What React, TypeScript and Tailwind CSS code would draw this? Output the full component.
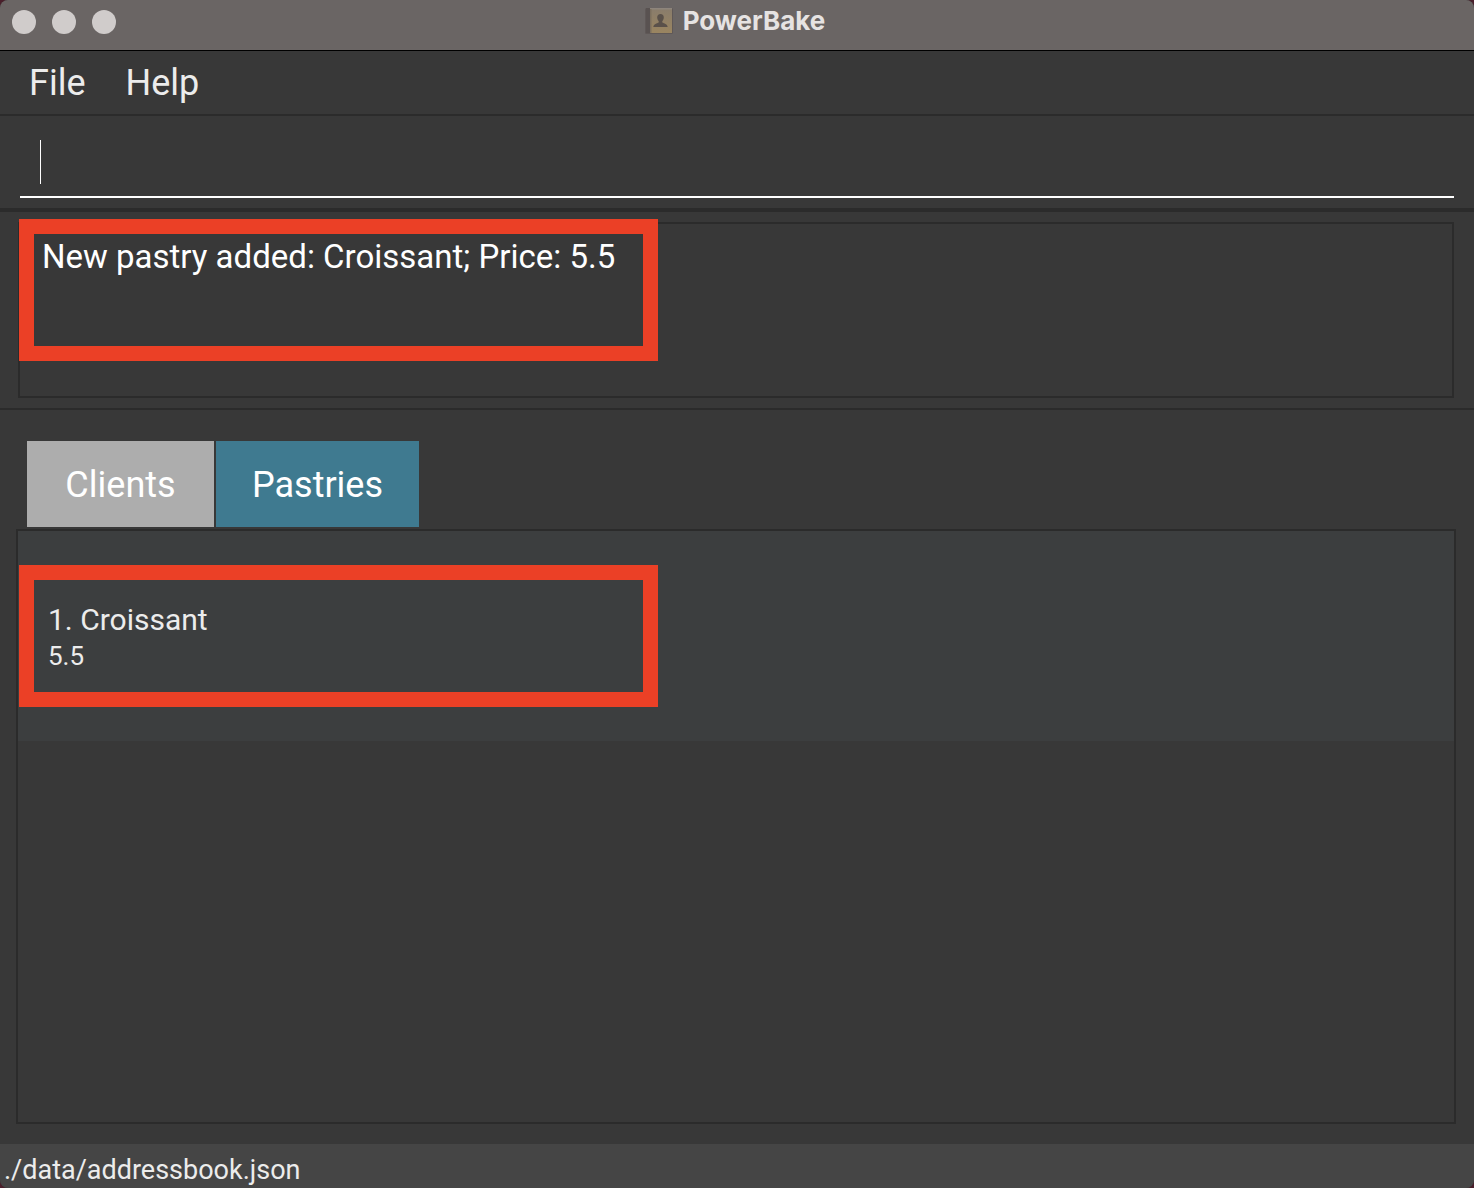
import React from "react";

function BookIcon() {
  return (
    <svg width="28" height="28" viewBox="0 0 28 28" aria-hidden="true">
      <defs>
        <linearGradient id="cover" x1="0" y1="0" x2="0" y2="1">
          <stop offset="0" stopColor="#897c6b" />
          <stop offset="1" stopColor="#9a8560" />
        </linearGradient>
      </defs>
      <rect x="0" y="1" width="28" height="26" rx="1.5" fill="#5f5857" />
      <rect x="1" y="1" width="4" height="25" fill="#595251" />
      <rect x="5" y="2" width="22" height="24" fill="url(#cover)" />
      <rect x="5" y="1" width="22" height="1.5" fill="#8e857c" />
      <rect x="5" y="2" width="1.5" height="24" fill="#7d705e" />
      <path
        d="M15.500 7c2.100 0 3.300 1.500 3.300 3.500 0 1.600-.7 2.800-1.500 3.600v1.400c1.800.9 5 1.300 5.400 4.500H8.300c.4-3.200 3.600-3.600 5.400-4.500v-1.400c-.8-.8-1.500-2-1.500-3.600 0-2 1.200-3.500 3.300-3.500z"
        fill="#5a514a"
      />
    </svg>
  );
}

function TitleBar() {
  return (
    <header className="relative flex h-[51px] shrink-0 items-start border-b border-black bg-[#6a6564]">
      <div className="absolute top-2.5 left-3 flex gap-4">
        <button aria-label="Close" className="size-6 rounded-full bg-[#d0cccb]" />
        <button aria-label="Minimize" className="size-6 rounded-full bg-[#d0cccb]" />
        <button aria-label="Zoom" className="size-6 rounded-full bg-[#d0cccb]" />
      </div>
      <div className="flex h-[42px] w-full items-center justify-center gap-2.5 pr-1">
        <BookIcon />
        <h1 className="font-['Inter',sans-serif] text-[26px] leading-8 font-bold text-[#e6e3e2]">PowerBake</h1>
      </div>
    </header>
  );
}

function Highlight({ className }: { className: string }) {
  return (
    <div
      className={`pointer-events-none absolute h-[142px] w-[639px] border-[15px] border-[#eb4026] ${className}`}
    />
  );
}

export default function App() {
  return (
    <div className="min-h-screen bg-[#4a1f2b] font-['Roboto',sans-serif]">
      <div className="flex min-h-screen flex-col overflow-hidden rounded-lg bg-[#383838]">
        <TitleBar />

        <nav className="flex h-[65px] shrink-0 items-center gap-10 border-b-2 border-[#2b2b2b] px-[29px] text-[36px] leading-[44px] text-[#ececec]">
          <button>File</button>
          <button>Help</button>
        </nav>

        <div className="shrink-0 border-b-4 border-[#2b2b2b] px-5 pt-3 pb-2.5">
          <div className="flex h-[70px] items-center border-b-2 border-white pl-5">
            <span className="h-11 w-px bg-white" />
            <input
              aria-label="Command"
              className="h-11 flex-1 bg-transparent text-[33px] text-white caret-transparent outline-none"
            />
          </div>
        </div>

        <section className="relative shrink-0 border-b-2 border-[#2b2b2b] py-2.5 pr-5 pl-[18px]">
          <textarea
            readOnly
            aria-label="Result"
            defaultValue="New pastry added: Croissant; Price: 5.5"
            className="block h-44 w-full resize-none border-2 border-[#2b2b2b] bg-transparent px-[22px] py-3 text-[33px] leading-[42px] text-white outline-none"
          />
          <Highlight className="top-[7px] left-[19px]" />
        </section>

        <main className="flex flex-1 flex-col px-4 pt-[31px] pb-5">
          <div role="tablist" className="flex gap-0.5 pb-0.5 pl-[11px] text-[36px] leading-[44px] text-white">
            <button role="tab" aria-selected="false" className="h-[86px] w-[187px] bg-[#adadad] pt-0.5">
              Clients
            </button>
            <button role="tab" aria-selected="true" className="h-[86px] w-[203px] bg-[#3f7a90] pt-0.5">
              Pastries
            </button>
          </div>
          <ul className="mr-0.5 flex-1 border-2 border-[#2b2b2b]">
            <li className="relative h-[210px] bg-[#3c3e3f] pt-[68px] pl-[30px] text-[#ececec]">
              <h2 className="text-[30px] leading-[42px]">1. Croissant</h2>
              <p className="text-[26px] leading-[30px]">5.5</p>
              <Highlight className="top-[34px] left-px" />
            </li>
          </ul>
        </main>

        <footer className="h-11 shrink-0 bg-[#454545] px-1 pt-1.5 text-[27px] leading-10 text-[#ececec]">
          ./data/addressbook.json
        </footer>
      </div>
    </div>
  );
}
